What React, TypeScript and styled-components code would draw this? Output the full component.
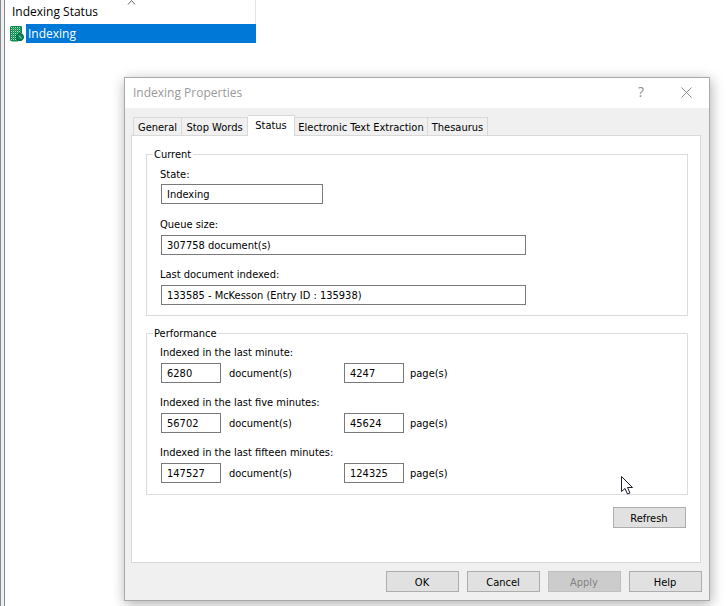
import React from 'react';
import styled, { createGlobalStyle, css } from 'styled-components';

const GlobalStyle = createGlobalStyle`
  *, *::before, *::after { box-sizing: border-box; }
  body { margin: 0; background: #fff; color: #000; }
  body, button, input {
    font-family: "DejaVu Sans Condensed", Tahoma, sans-serif;
    font-size: 11px;
    line-height: 16px;
  }
`;

const Workspace = styled.div`
  position: relative;
  display: flex;
  min-height: 100vh;
  overflow: hidden;
`;

const Splitter = styled.div`
  flex: none;
  width: 5px;
  background: #f0f0f0;
  border-left: 1px solid #828790;
  border-right: 1px solid #828790;
`;

const ListPane = styled.section`
  flex: 1;
  font-family: "Open Sans", "Segoe UI", sans-serif;
  font-size: 12px;
`;

const ColumnHeader = styled.header`
  position: relative;
  width: 251px;
  height: 24px;
  padding: 4px 7px;
  border-right: 1px solid #e5e5e5;
`;

const SortArrow = styled.svg`
  position: absolute;
  top: 0;
  left: 122px;
`;

const ListItem = styled.div`
  display: flex;
  align-items: center;
  gap: 1px;
  width: 251px;
  height: 19px;
  padding-left: 4px;
  svg { flex: none; width: 16px; height: 17px; }
`;

const ItemName = styled.span`
  flex: 1;
  padding: 0 2px;
  line-height: 19px;
  color: #fff;
  background: #0078d7;
`;

const Dialog = styled.section`
  position: absolute;
  top: 77px;
  left: 124px;
  right: 16px;
  background: #f0f0f0;
  border: 1px solid #a9a9a9;
  box-shadow: 1px 3px 12px rgba(0, 0, 0, 0.32);
`;

const TitleBar = styled.header`
  display: flex;
  align-items: center;
  height: 30px;
  padding-left: 8px;
  color: #999;
  background: #fff;
`;

const Title = styled.h1`
  flex: 1;
  margin: 0;
  font: 400 12px/16px "Open Sans", "Segoe UI", sans-serif;
`;

const CaptionButton = styled.button`
  display: grid;
  place-items: center;
  width: 45px;
  height: 30px;
  padding: 0 1px 2px 0;
  color: #8e8e8e;
  background: none;
  border: 0;
  font: 14px/16px "Open Sans", sans-serif;
`;

const DialogBody = styled.div`
  padding: 7px 7px 8px 6px;
`;

const TabStrip = styled.div`
  display: flex;
  align-items: flex-end;
  padding-left: 2px;
`;

const Tab = styled.button<{ $active?: boolean; $width: number }>`
  width: ${(p) => p.$width}px;
  height: 18px;
  padding: 2px 0 0;
  color: #000;
  background: #f0f0f0;
  border: 1px solid #d9d9d9;
  border-bottom: 0;
  white-space: nowrap;
  & + & { border-left: 0; }
  ${(p) =>
    p.$active &&
    css`
      z-index: 1;
      height: 21px;
      margin-bottom: -1px;
      padding: 0 0 1px;
      background: #fff;
    `}
`;

const TabPanel = styled.div`
  margin-right: 1px;
  padding: 10px 12px 34px 14px;
  background: #fff;
  border: 1px solid #d9d9d9;
`;

const Group = styled.fieldset`
  min-width: 0;
  margin: 0;
  padding: 0 6px;
  border: 1px solid #dcdcdc;
  & + & { margin-top: 9px; }
`;

const GroupTitle = styled.legend`
  padding: 2px 2px 0 1px;
  line-height: 14px;
`;

const GroupRows = styled.div<{ $compact?: boolean }>`
  display: grid;
  gap: 12px;
  padding: ${(p) => (p.$compact ? '4px 8px 11px' : '5px 8px 10px')};
`;

const FieldRow = styled.div<{ $tight?: boolean }>`
  display: flex;
  flex-direction: column;
  align-items: flex-start;
  gap: ${(p) => (p.$tight ? 1 : 2)}px;
  min-height: 38px;
`;

const Label = styled.label`
  display: block;
  margin-left: -1px;
`;

const ValueBox = styled.input<{ $width: number }>`
  width: ${(p) => p.$width}px;
  max-width: 100%;
  height: 20px;
  padding: 0 5px;
  color: #000;
  background: #fff;
  border: 1px solid #7a7a7a;
  border-radius: 0;
  outline: 0;
`;

const Measures = styled.div`
  display: flex;
  align-items: center;
`;

const Unit = styled.label<{ $width: number; $gap: number }>`
  width: ${(p) => p.$width}px;
  padding-top: 2px;
  padding-left: ${(p) => p.$gap}px;
`;

const PushButton = styled.button`
  width: 73px;
  height: 21px;
  padding: 2px 1px 0 0;
  color: #000;
  background: #e1e1e1;
  border: 1px solid #adadad;
  &:disabled {
    color: #838383;
    background: #ccc;
    border-color: #bfbfbf;
  }
`;

const PanelActions = styled.div`
  display: flex;
  justify-content: flex-end;
  padding: 12px 2px 0 0;
`;

const DialogActions = styled.footer`
  display: flex;
  justify-content: flex-end;
  gap: 8px;
  padding-top: 8px;
`;

const Pointer = styled.svg`
  position: absolute;
  left: 621px;
  top: 475px;
  pointer-events: none;
`;

const IndexIcon = () => (
  <svg viewBox="0 0 16 17" aria-hidden="true">
    <defs>
      <pattern id="dots" width="2" height="2" patternUnits="userSpaceOnUse">
        <rect width="2" height="2" fill="#0a8a4a" />
        <rect width="1" height="1" fill="#b4dccb" shapeRendering="crispEdges" />
        <rect x="1" y="1" width="1" height="1" fill="#3fa878" shapeRendering="crispEdges" />
      </pattern>
    </defs>
    <path d="M2 1h10l1 1v13l-1 1H2l-1-1V2z" fill="url(#dots)" />
    <path d="M1.500 2v13l1 1H9M2 1.500h10l.5.5v6" fill="none" stroke="#0a8a4a" />
    <circle cx="11" cy="12" r="3.500" fill="#0d8560" stroke="#00683c" />
    <path d="M10 10.500l2.500 3" stroke="#a9dbc7" fill="none" />
  </svg>
);

const tabs = [
  { name: 'General', width: 49 },
  { name: 'Stop Words', width: 66 },
  { name: 'Status', width: 47, active: true },
  { name: 'Electronic Text Extraction', width: 133 },
  { name: 'Thesaurus', width: 60 },
];

const currentFields = [
  { id: 'state', label: 'State:', value: 'Indexing', width: 162, tight: true },
  { id: 'queue', label: 'Queue size:', value: '307758 document(s)', width: 365 },
  { id: 'last', label: 'Last document indexed:', value: '133585 - McKesson (Entry ID : 135938)', width: 365 },
];

const periods = [
  { id: 'one', label: 'Indexed in the last minute:', documents: '6280', pages: '4247' },
  { id: 'five', label: 'Indexed in the last five minutes:', documents: '56702', pages: '45624' },
  { id: 'fifteen', label: 'Indexed in the last fifteen minutes:', documents: '147527', pages: '124325' },
];

export default function App() {
  return (
    <Workspace>
      <GlobalStyle />
      <Splitter />
      <ListPane>
        <ColumnHeader>
          Indexing Status
          <SortArrow width="9" height="5" viewBox="0 0 9 5" aria-hidden="true">
            <path d="M1 4.5l3.5-4 3.5 4" fill="none" stroke="#666" />
          </SortArrow>
        </ColumnHeader>
        <ListItem>
          <IndexIcon />
          <ItemName>Indexing</ItemName>
        </ListItem>
      </ListPane>

      <Dialog role="dialog" aria-labelledby="dialog-title">
        <TitleBar>
          <Title id="dialog-title">Indexing Properties</Title>
          <CaptionButton>?</CaptionButton>
          <CaptionButton aria-label="Close">
            <svg width="11" height="11" viewBox="0 0 11 11" aria-hidden="true">
              <path d="M.5.5l10 10M10.5.5l-10 10" stroke="currentColor" />
            </svg>
          </CaptionButton>
        </TitleBar>
        <DialogBody>
          <TabStrip role="tablist">
            {tabs.map((t) => (
              <Tab key={t.name} role="tab" aria-selected={!!t.active} $active={t.active} $width={t.width}>
                {t.name}
              </Tab>
            ))}
          </TabStrip>
          <TabPanel role="tabpanel">
            <Group>
              <GroupTitle>Current</GroupTitle>
              <GroupRows>
                {currentFields.map((f) => (
                  <FieldRow key={f.id} $tight={f.tight}>
                    <Label htmlFor={f.id}>{f.label}</Label>
                    <ValueBox id={f.id} readOnly value={f.value} $width={f.width} />
                  </FieldRow>
                ))}
              </GroupRows>
            </Group>
            <Group>
              <GroupTitle>Performance</GroupTitle>
              <GroupRows $compact>
                {periods.map((p) => (
                  <FieldRow key={p.id} role="group" aria-labelledby={p.id}>
                    <Label as="span" id={p.id}>{p.label}</Label>
                    <Measures>
                      <ValueBox id={p.id + '-docs'} readOnly value={p.documents} $width={60} />
                      <Unit htmlFor={p.id + '-docs'} $width={123} $gap={8}>document(s)</Unit>
                      <ValueBox id={p.id + '-pages'} readOnly value={p.pages} $width={60} />
                      <Unit htmlFor={p.id + '-pages'} $width={60} $gap={6}>page(s)</Unit>
                    </Measures>
                  </FieldRow>
                ))}
              </GroupRows>
            </Group>
            <PanelActions>
              <PushButton>Refresh</PushButton>
            </PanelActions>
          </TabPanel>
          <DialogActions>
            <PushButton>OK</PushButton>
            <PushButton>Cancel</PushButton>
            <PushButton disabled>Apply</PushButton>
            <PushButton>Help</PushButton>
          </DialogActions>
        </DialogBody>
      </Dialog>

      <Pointer width="13" height="20" viewBox="0 0 13 20" aria-hidden="true">
        <path
          d="M.5 1.500v15L4 13.500l2.500 5.500 2.500-1-2.500-5.500h5z"
          fill="#fff"
          stroke="#1c1c2c"
        />
      </Pointer>
    </Workspace>
  );
}
